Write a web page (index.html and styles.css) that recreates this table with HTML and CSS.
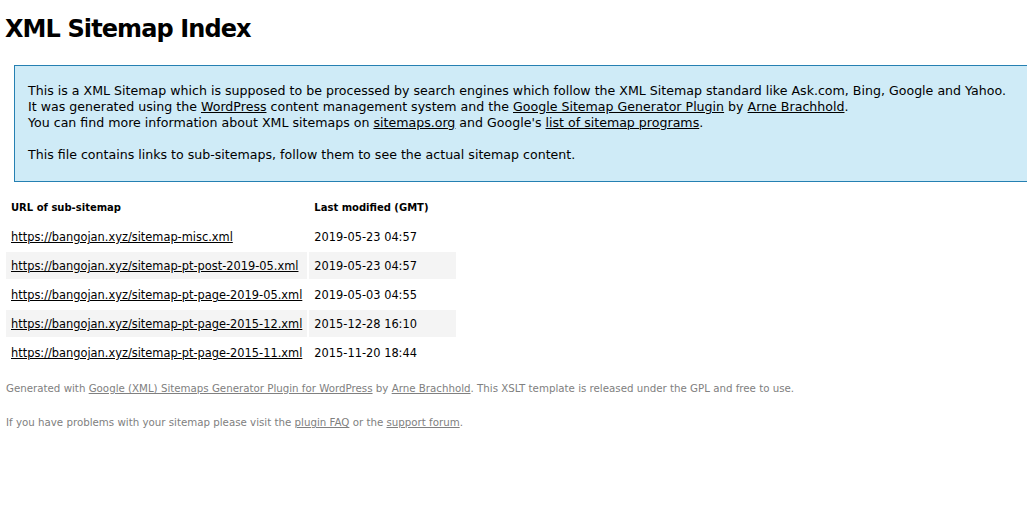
FILE: index.html
```html
<!DOCTYPE html>
<html>
<head>
<meta charset="utf-8">
<title>XML Sitemap</title>
<link rel="stylesheet" href="styles.css">
</head>
<body>
<h1 class="title">XML Sitemap Index</h1>
<div class="intro">
  <p class="first">
    This is a XML Sitemap which is supposed to be processed by search engines which follow the XML Sitemap standard like Ask.com, Bing, Google and Yahoo.<br>
    It was generated using the <a href="#">WordPress</a> content management system and the <a href="#">Google Sitemap Generator Plugin</a> by <a href="#">Arne Brachhold</a>.<br>
    You can find more information about XML sitemaps on <a href="#">sitemaps.org</a> and Google's <a href="#">list of sitemap programs</a>.
  </p>
  <p class="second">This file contains links to sub-sitemaps, follow them to see the actual sitemap content.</p>
</div>
<table class="list">
  <tr>
    <th>URL of sub-sitemap</th>
    <th>Last modified (GMT)</th>
  </tr>
  <tr><td><a href="#">https://bangojan.xyz/sitemap-misc.xml</a></td><td>2019-05-23 04:57</td></tr>
  <tr class="high"><td><a href="#">https://bangojan.xyz/sitemap-pt-post-2019-05.xml</a></td><td>2019-05-23 04:57</td></tr>
  <tr><td><a href="#">https://bangojan.xyz/sitemap-pt-page-2019-05.xml</a></td><td>2019-05-03 04:55</td></tr>
  <tr class="high"><td><a href="#">https://bangojan.xyz/sitemap-pt-page-2015-12.xml</a></td><td>2015-12-28 16:10</td></tr>
  <tr><td><a href="#">https://bangojan.xyz/sitemap-pt-page-2015-11.xml</a></td><td>2015-11-20 18:44</td></tr>
</table>
<div class="footer">
  <p>Generated with <a href="#">Google (XML) Sitemaps Generator Plugin for WordPress</a> by <a href="#">Arne Brachhold</a>. This XSLT template is released under the GPL and free to use.</p>
  <p>If you have problems with your sitemap please visit the <a href="#">plugin FAQ</a> or the <a href="#">support forum</a>.</p>
</div>
</body>
</html>
```
FILE: styles.css
```css
html {
  overflow-x: hidden;
}
body {
  margin: 0;
  padding: 4px;
  font-family: "DejaVu Sans", Verdana, sans-serif;
  font-size: 12.6px;
  color: #000;
  background: #fff;
}
a {
  color: #000;
}
.title {
  font-size: 24px;
  letter-spacing: -0.9px;
  font-weight: bold;
  margin: 8px 0 0 1px;
  line-height: 34px;
}
.intro {
  background-color: #CFEBF7;
  border: 1px solid #2580B2;
  padding: 5px 13px;
  margin: 19px -40px 10px 10px;
}
.intro p {
  line-height: 16px;
  margin: 13px 0;
}
.intro p.first {
  margin-top: 12px;
}
.intro p.second {
  margin-top: 16px;
}
.list {
  border-spacing: 2px;
  margin-top: 10px;
}
.list th {
  text-align: left;
  font-size: 10px;
  padding: 6px 28px 6px 5px;
  line-height: 15px;
}
.list td {
  font-size: 11.4px;
  padding: 7px 5px 5px;
  line-height: 15px;
}
.list tr.high td {
  background-color: #F4F4F4;
}
.footer {
  padding: 2px;
  margin-top: 6px;
  font-size: 10.25px;
  color: #808080;
}
.footer p {
  margin: 5px 0 20px;
  line-height: 14px;
}
.footer a {
  color: #808080;
}
```
